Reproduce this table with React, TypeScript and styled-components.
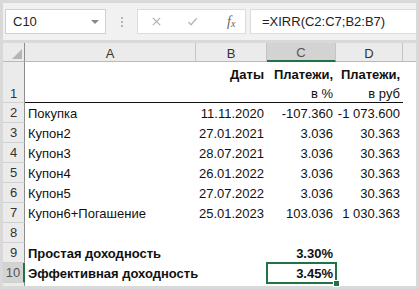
import React from "react";
import styled, { createGlobalStyle } from "styled-components";

const GlobalStyle = createGlobalStyle`
  html, body { margin: 0; padding: 0; background: #fff; }
  body { font-family: "Liberation Sans", Arial, sans-serif; }
`;

interface Row {
  n: number;
  a?: string;
  b?: string;
  c?: string;
  d?: string;
  bold?: boolean;
}

const rows: Row[] = [
  { n: 2, a: "Покупка", b: "11.11.2020", c: "-107.360", d: "-1 073.600" },
  { n: 3, a: "Купон2", b: "27.01.2021", c: "3.036", d: "30.363" },
  { n: 4, a: "Купон3", b: "28.07.2021", c: "3.036", d: "30.363" },
  { n: 5, a: "Купон4", b: "26.01.2022", c: "3.036", d: "30.363" },
  { n: 6, a: "Купон5", b: "27.07.2022", c: "3.036", d: "30.363" },
  { n: 7, a: "Купон6+Погашение", b: "25.01.2023", c: "103.036", d: "1 030.363" },
  { n: 8 },
  { n: 9, a: "Простая доходность", c: "3.30%", bold: true },
  { n: 10, a: "Эффективная доходность", c: "3.45%", bold: true },
];

const SELECTED_ROW = 10;

export default function App() {
  return (
    <>
      <GlobalStyle />
      <Frame>
        <Toolbar>
          <NameBox>
            <span>C10</span>
            <Caret />
          </NameBox>
          <Dots>
            <i />
            <i />
            <i />
          </Dots>
          <ButtonBox>
            <ToolIcon viewBox="0 0 12 12">
              <path d="M2 2 L10 10 M10 2 L2 10" />
            </ToolIcon>
            <ToolIcon viewBox="0 0 12 12">
              <path d="M1.5 6.5 L4.5 9.5 L10.5 2.5" />
            </ToolIcon>
            <Fx>
              f<sub>x</sub>
            </Fx>
          </ButtonBox>
          <FormulaBox>=XIRR(C2:C7;B2:B7)</FormulaBox>
        </Toolbar>

        <Sheet>
          <Corner>
            <svg width="10" height="10" viewBox="0 0 10 10">
              <path d="M10 0 L10 10 L0 10 Z" fill="#b5b5b5" />
            </svg>
          </Corner>
          <ColHead>A</ColHead>
          <ColHead>B</ColHead>
          <ColHead $active>C</ColHead>
          <ColHead>D</ColHead>
          <ColHead $blank />

          <RowHead $tall>1</RowHead>
          <Cell $top />
          <Cell $top $align="right">
            <Lines>
              <b>Даты</b>
              <span>&nbsp;</span>
            </Lines>
          </Cell>
          <Cell $top $align="right">
            <Lines>
              <b>Платежи,</b>
              <span>в %</span>
            </Lines>
          </Cell>
          <Cell $top $align="right">
            <Lines>
              <b>Платежи,</b>
              <span>в руб</span>
            </Lines>
          </Cell>
          <Cell />

          {rows.map((r) => (
            <React.Fragment key={r.n}>
              <RowHead $active={r.n === SELECTED_ROW}>{r.n}</RowHead>
              <Cell $bold={r.bold}>{r.a}</Cell>
              <Cell $align="right">{r.b}</Cell>
              <Cell $align="right" $bold={r.bold} $selected={r.n === SELECTED_ROW}>
                {r.c}
                {r.n === SELECTED_ROW && <Handle />}
              </Cell>
              <Cell $align="right">{r.d}</Cell>
              <Cell />
            </React.Fragment>
          ))}
          <RowHead $filler />
          <Cell />
          <Cell />
          <Cell />
          <Cell />
          <Cell />
        </Sheet>
      </Frame>
    </>
  );
}

const Frame = styled.div`
  width: 419px;
  height: 289px;
  box-sizing: border-box;
  padding: 3px;
  background: #d9d9d9;
  display: flex;
  flex-direction: column;
  gap: 3px;
  overflow: hidden;
`;

const Toolbar = styled.div`
  height: 37px;
  flex: none;
  background: #f1f1f1;
  display: flex;
  align-items: center;
  padding: 0 0 0 2px;
`;

const NameBox = styled.div`
  width: 101px;
  height: 25px;
  box-sizing: border-box;
  background: #fff;
  border: 1px solid #d0d0d0;
  display: flex;
  align-items: center;
  justify-content: space-between;
  padding: 0 6px 0 7px;
  font-size: 13px;
  color: #222;
`;

const Caret = styled.span`
  width: 0;
  height: 0;
  border-left: 4px solid transparent;
  border-right: 4px solid transparent;
  border-top: 4px solid #8a8a8a;
`;

const Dots = styled.div`
  width: 31px;
  display: flex;
  flex-direction: column;
  align-items: center;
  gap: 2px;
  i {
    width: 2px;
    height: 2px;
    background: #b5b5b5;
  }
`;

const ButtonBox = styled.div`
  width: 109px;
  height: 25px;
  box-sizing: border-box;
  background: #fff;
  border: 1px solid #dcdcdc;
  display: flex;
  align-items: center;
  padding: 0 10px 0 13px;
  gap: 25px;
`;

const ToolIcon = styled.svg`
  width: 11px;
  height: 11px;
  flex: none;
  fill: none;
  stroke: #b3b3b3;
  stroke-width: 1.4;
`;

const Fx = styled.span`
  font-family: "Liberation Serif", "Times New Roman", serif;
  font-style: italic;
  font-size: 14px;
  color: #666;
  margin-left: 4px;
  sub {
    font-size: 10px;
    vertical-align: -1px;
  }
`;

const FormulaBox = styled.div`
  flex: 1;
  height: 25px;
  margin-left: 4px;
  box-sizing: border-box;
  background: #fff;
  border: 1px solid #dcdcdc;
  border-right: none;
  display: flex;
  align-items: center;
  padding-left: 11px;
  font-size: 13px;
  color: #222;
`;

const Sheet = styled.div`
  flex: 1;
  display: grid;
  grid-template-columns: 22px 171px 71px 69px 67px 1fr;
  grid-template-rows: 19px 41px repeat(9, 20px) 1fr;
  background: #fff;
`;

const Corner = styled.div`
  background: #ebebeb;
  border-right: 1px solid #8d8d8d;
  border-bottom: 1px solid #b9b9b9;
  display: flex;
  align-items: flex-end;
  justify-content: flex-end;
  padding: 0 2px 2px 0;
  box-sizing: border-box;
`;

const ColHead = styled.div<{ $active?: boolean; $blank?: boolean }>`
  background: ${(p) => (p.$active ? "#d3d3d3" : "#ebebeb")};
  border-right: ${(p) => (p.$blank ? "none" : "1px solid #c4c4c4")};
  border-bottom: ${(p) => (p.$active ? "2px solid #217346" : "1px solid #b9b9b9")};
  box-sizing: border-box;
  display: flex;
  align-items: center;
  justify-content: center;
  font-size: 13px;
  color: ${(p) => (p.$active ? "#555" : "#333")};
  padding-top: 2px;
`;

const RowHead = styled.div<{ $active?: boolean; $tall?: boolean; $filler?: boolean }>`
  background: ${(p) => (p.$active ? "#d3d3d3" : "#ebebeb")};
  border-right: ${(p) => (p.$active ? "2px solid #217346" : "1px solid #8d8d8d")};
  border-bottom: ${(p) => (p.$filler ? "none" : "1px solid #d0d0d0")};
  box-sizing: border-box;
  display: flex;
  align-items: ${(p) => (p.$tall ? "flex-end" : "center")};
  justify-content: center;
  padding-bottom: ${(p) => (p.$tall ? "1px" : "0")};
  font-size: 13px;
  color: ${(p) => (p.$active ? "#555" : "#333")};
`;

const Cell = styled.div<{
  $align?: "left" | "right";
  $bold?: boolean;
  $top?: boolean;
  $selected?: boolean;
}>`
  position: relative;
  box-sizing: border-box;
  display: flex;
  align-items: ${(p) => (p.$top ? "flex-end" : "center")};
  justify-content: ${(p) => (p.$align === "right" ? "flex-end" : "flex-start")};
  padding: ${(p) => (p.$align === "right" ? "0 3px 0 0" : "0 0 0 3px")};
  border-bottom: ${(p) => (p.$top ? "1px solid #111" : "none")};
  outline: ${(p) => (p.$selected ? "2px solid #217346" : "none")};
  outline-offset: -1px;
  font-size: 13px;
  font-weight: ${(p) => (p.$bold ? 700 : 400)};
  color: #111;
  white-space: nowrap;
`;

const Lines = styled.div`
  display: flex;
  flex-direction: column;
  align-items: flex-end;
  line-height: 19px;
  margin-bottom: -1px;
`;

const Handle = styled.span`
  position: absolute;
  right: -4px;
  bottom: -4px;
  width: 5px;
  height: 5px;
  background: #217346;
  border: 1px solid #fff;
`;
